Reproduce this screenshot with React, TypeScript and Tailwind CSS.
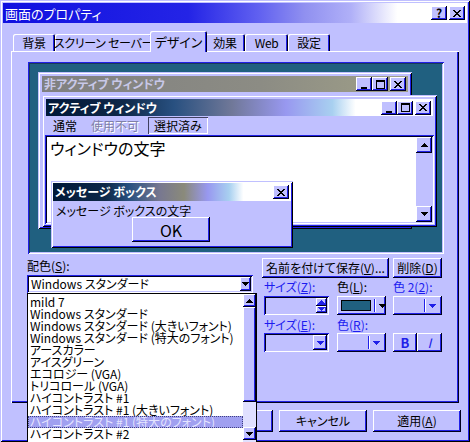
import React from "react";

const raised =
  "shadow-[inset_-1px_-1px_0_#000020,inset_1px_1px_0_#ffffff,inset_-2px_-2px_0_#2020e8]";
const sunken =
  "shadow-[inset_1px_1px_0_#2020e8,inset_-1px_-1px_0_#ffffff,inset_2px_2px_0_#000020,inset_-2px_-2px_0_#c0c0ff]";
const frame =
  "shadow-[inset_1px_1px_0_#c0c0ff,inset_-1px_-1px_0_#000000,inset_2px_2px_0_#ffffff,inset_-2px_-2px_0_#2020e8]";

const Down = ({ c = "#000000" }: { c?: string }) => (
  <svg width="7" height="4" viewBox="0 0 7 4" shapeRendering="crispEdges">
    <path d="M0 0h7v1h-1v1h-1v1h-1v1h-1v-1h-1v-1h-1v-1h-1z" fill={c} />
  </svg>
);

const Up = ({ c = "#000000" }: { c?: string }) => (
  <svg width="7" height="4" viewBox="0 0 7 4" shapeRendering="crispEdges">
    <path d="M3 0h1v1h1v1h1v1h1v1h-7v-1h1v-1h1v-1h1z" fill={c} />
  </svg>
);

const Glyph = ({ kind }: { kind: "min" | "max" | "close" }) => {
  if (kind === "min")
    return (
      <svg width="8" height="9" viewBox="0 0 8 9" shapeRendering="crispEdges">
        <rect x="1" y="7" width="6" height="2" fill="#000" />
      </svg>
    );
  if (kind === "max")
    return (
      <svg width="9" height="9" viewBox="0 0 9 9" shapeRendering="crispEdges">
        <path d="M0 0h9v9h-9zM1 2v6h7v-6z" fill="#000" fillRule="evenodd" />
      </svg>
    );
  return (
    <svg width="8" height="7" viewBox="0 0 8 7" shapeRendering="crispEdges">
      <path
        d="M0 0h2v1h1v1h2v-1h1v-1h2v1h-1v1h-1v1h-1v1h1v1h1v1h1v1h-2v-1h-1v-1h-2v1h-1v1h-2v-1h1v-1h1v-1h1v-1h-1v-1h-1v-1h-1z"
        fill="#000"
      />
    </svg>
  );
};

function Btn({ className = "", children }: { className?: string; children?: React.ReactNode }) {
  return (
    <div className={`flex items-center justify-center bg-[#c0c0ff] ${raised} ${className}`}>
      {children}
    </div>
  );
}

const TitleButtons = () => (
  <div className="ml-auto flex items-center">
    <Btn className="w-[16px] h-[14px] pt-[1px]">
      <Glyph kind="min" />
    </Btn>
    <Btn className="w-[16px] h-[14px]">
      <Glyph kind="max" />
    </Btn>
    <Btn className="ml-[2px] w-[16px] h-[14px]">
      <Glyph kind="close" />
    </Btn>
  </div>
);

const U = ({ children }: { children: React.ReactNode }) => <span className="underline">{children}</span>;

const schemes = [
  "mild 7",
  "Windows スタンダード",
  "Windows スタンダード (大きいフォント)",
  "Windows スタンダード (特大のフォント)",
  "アースカラー",
  "アイスグリーン",
  "エコロジー (VGA)",
  "トリコロール (VGA)",
  "ハイコントラスト #1",
  "ハイコントラスト #1 (大きいフォント)",
  "ハイコントラスト #1 (特大のフォント)",
  "ハイコントラスト #2",
];

const tabs = [
  { label: "背景", w: "w-[42px]" },
  { label: "スクリーン セーバー", w: "w-[97px]" },
  { label: "デザイン", w: "w-[57px]", active: true },
  { label: "効果", w: "w-[40px]" },
  { label: "Web", w: "w-[43px]" },
  { label: "設定", w: "w-[42px]" },
];

export default function App() {
  return (
    <div
      className={`relative w-[470px] h-[442px] overflow-hidden bg-[#c0c0ff] p-[3px] flex flex-col text-[12px] leading-none text-black font-['Noto_Sans_CJK_JP',sans-serif] [font-feature-settings:'palt'] ${frame}`}
    >
      {/* title bar */}
      <div className="h-[20px] flex items-center pl-[2px] pr-[2px] bg-[linear-gradient(to_right,#1010e0_0%,#2424e6_40%,#6060f0_55%,#9090f0_65%,#b0b0f8_75%,#ffffff_85%)]">
        <span className="text-white text-[13px]">画面のプロパティ</span>
        <div className="ml-auto flex gap-[2px]">
          <Btn className="w-[16px] h-[14px] font-bold text-[12px]">?</Btn>
          <Btn className="w-[16px] h-[14px]">
            <Glyph kind="close" />
          </Btn>
        </div>
      </div>

      {/* tabs */}
      <div className="mt-[8px] h-[20px] flex items-end pl-[10px]">
        {tabs.map((t) =>
          t.active ? (
            <div
              key={t.label}
              className={`${t.w} relative z-10 -mx-[2px] -mb-[1px] h-[21px] flex items-center justify-center whitespace-nowrap text-[13px] bg-[#c0c0ff] rounded-t-[2px] shadow-[inset_1px_1px_0_#ffffff,inset_-1px_0_0_#000020,inset_-2px_0_0_#2020e8]`}
            >
              {t.label}
            </div>
          ) : (
            <div
              key={t.label}
              className={`${t.w} h-[17px] flex items-center justify-center whitespace-pre text-[12px] tracking-[-0.3px] rounded-t-[2px] shadow-[inset_1px_1px_0_#ffffff,inset_-1px_0_0_#000020,inset_-2px_0_0_#2020e8]`}
            >
              {t.label}
            </div>
          )
        )}
      </div>

      {/* tab panel */}
      <div className="ml-[8px] w-[448px] h-[352px] flex flex-col shadow-[inset_1px_1px_0_#ffffff,inset_-1px_-1px_0_#000020,inset_-2px_-2px_0_#2020e8]">
        {/* preview */}
        <div className="ml-[17px] mt-[11px] w-[416px] h-[192px] p-[2px] shadow-[inset_1px_1px_0_#2020e8,inset_-1px_-1px_0_#ffffff,inset_2px_2px_0_#1a3a5a,inset_-2px_-2px_0_#c0c0ff]">
          <div className="relative w-full h-full bg-[#206080]">
            {/* inactive window */}
            <div className={`absolute left-[8px] top-[8px] w-[374px] h-[157px] bg-[#c0c0ff] p-[4px] ${frame}`}>
              <div className="h-[16px] flex items-center pl-[2px] pr-[2px] bg-[linear-gradient(to_right,#808080,#8c8c84_60%,#a0a088)]">
                <span className="font-bold text-[#c8c8e8]">非アクティブ ウィンドウ</span>
                <TitleButtons />
              </div>
            </div>

            {/* active window */}
            <div className={`absolute left-[12px] top-[31px] w-[395px] h-[132px] bg-[#c0c0ff] p-[3px] flex flex-col ${frame}`}>
              <div className="mx-[1px] mt-[1px] h-[17px] flex items-center pl-[2px] pr-[2px] bg-[linear-gradient(to_right,#001838_0%,#0e2848_20%,#285080_33%,#707898_48%,#9898f0_62%,#a8d0f0_74%,#ffffff_80%)]">
                <span className="font-bold text-white">アクティブ ウィンドウ</span>
                <TitleButtons />
              </div>
              <div className="h-[19px] flex items-center pl-[8px] gap-[14px]">
                <span>通常</span>
                <span className="text-[#8080a8] [text-shadow:1px_1px_0_#ffffff]">使用不可</span>
                <span className="-ml-[5px] h-[17px] px-[6px] flex items-center shadow-[inset_1px_1px_0_#404060,inset_-1px_-1px_0_#ffffff]">
                  選択済み
                </span>
              </div>
              <div className={`flex-1 flex bg-white p-[2px] ${sunken}`}>
                <div className="flex-1 pl-[3px] pt-[3px] text-[16px]">ウィンドウの文字</div>
                <div className="w-[16px] flex flex-col justify-between bg-[#c0c0ff]">
                  <Btn className="h-[16px]">
                    <Up />
                  </Btn>
                  <Btn className="h-[16px]">
                    <Down />
                  </Btn>
                </div>
              </div>
            </div>

            {/* message box */}
            <div className={`absolute left-[21px] top-[117px] w-[242px] h-[67px] bg-[#c0c0ff] p-[2px] flex flex-col ${frame}`}>
              <div className="h-[18px] flex items-center pl-[2px] pr-[2px] bg-[linear-gradient(to_right,#001838_0%,#0e2848_22%,#285080_32%,#787890_45%,#8a8a7a_55%,#9898f0_65%,#a8d0f0_74%,#ffffff_80%)]">
                <span className="font-bold text-white">メッセージ ボックス</span>
                <Btn className="ml-auto w-[16px] h-[14px]">
                  <Glyph kind="close" />
                </Btn>
              </div>
              <div className="pl-[3px] pt-[4px] h-[16px]">メッセージ ボックスの文字</div>
              <Btn className="ml-[79px] w-[78px] h-[25px] text-[16px]">OK</Btn>
            </div>
          </div>
        </div>

        {/* lower controls */}
        <div className="mt-[4px] flex">
          <div className="ml-[16px] w-[226px] flex flex-col">
            <div className="h-[17px] pt-[2px]">
              配色(<U>S</U>):
            </div>
            <div className={`h-[18px] flex items-center bg-white p-[2px] ${sunken}`}>
              <span className="flex-1 pl-[2px]">Windows スタンダード</span>
              <Btn className="w-[11px] h-full">
                <Down />
              </Btn>
            </div>
          </div>

          <div className="ml-[9px] w-[181px] flex flex-col">
            <div className="h-[20px] flex gap-[4px]">
              <Btn className="w-[127px] h-full">
                名前を付けて保存(<U>V</U>)...
              </Btn>
              <Btn className="w-[49px] h-full">
                削除(<U>D</U>)
              </Btn>
            </div>
            <div className="mt-[3px] h-[15px] pl-[2px] grid grid-cols-[73px_56px_49px] text-[#1c1cf0]">
              <span>
                サイズ(<U>Z</U>):
              </span>
              <span className="text-black">
                色(<U>L</U>):
              </span>
              <span>
                色 2(<U>2</U>):
              </span>
            </div>
            <div className="h-[19px] pl-[2px] grid grid-cols-[73px_56px_49px]">
              <div className={`w-[65px] h-full flex justify-end p-[2px] ${sunken}`}>
                <div className="w-[11px] flex flex-col">
                  <Btn className="flex-1">
                    <Up c="#2020e8" />
                  </Btn>
                  <Btn className="flex-1">
                    <Down c="#2020e8" />
                  </Btn>
                </div>
              </div>
              <Btn className="w-[49px] h-full justify-start pl-[4px] gap-[3px]">
                <div className="w-[30px] h-[11px] bg-[#206080] border border-black" />
                <div className="w-[2px] h-[13px] border-l border-[#2020e8] bg-white" />
                <Down />
              </Btn>
              <Btn className="w-[49px] h-full justify-end pr-[6px] gap-[3px]">
                <div className="w-[2px] h-[13px] border-l border-[#2020e8] bg-white" />
                <Down c="#2020e8" />
              </Btn>
            </div>
            <div className="mt-[4px] h-[14px] pl-[2px] grid grid-cols-[73px_56px_49px] text-[#1c1cf0]">
              <span>
                サイズ(<U>E</U>):
              </span>
              <span>
                色(<U>R</U>):
              </span>
              <span />
            </div>
            <div className="h-[19px] pl-[2px] grid grid-cols-[73px_56px_49px]">
              <div className={`w-[65px] h-full flex justify-end p-[2px] ${sunken}`}>
                <Btn className="w-[14px]">
                  <Down c="#2020e8" />
                </Btn>
              </div>
              <Btn className="w-[49px] h-full justify-end pr-[6px] gap-[3px]">
                <div className="w-[2px] h-[13px] border-l border-[#2020e8] bg-white" />
                <Down c="#2020e8" />
              </Btn>
              <div className="w-[49px] h-full flex">
                <Btn className="w-[24px] h-full font-bold text-[13px] text-[#2020e8]">B</Btn>
                <Btn className="w-[25px] h-full italic text-[13px] text-[#2020e8]">I</Btn>
              </div>
            </div>
          </div>
        </div>
      </div>

      {/* dialog buttons */}
      <div className="mt-[7px] h-[22px] flex justify-end gap-[6px] pr-[6px]">
        <Btn className="w-[88px] h-full">OK</Btn>
        <Btn className="w-[88px] h-full">キャンセル</Btn>
        <Btn className="w-[88px] h-full">
          適用(<U>A</U>)
        </Btn>
      </div>

      {/* open scheme list */}
      <div className="absolute left-[27px] top-[293px] w-[230px] h-[152px] flex bg-white border border-black">
        <div className="flex-1 flex flex-col pt-[2px]">
          {schemes.map((s, i) =>
            i === 10 ? (
              <div
                key={s}
                className="h-[12px] flex items-center pl-[2px] whitespace-nowrap bg-[#a0a0f0] text-[#e4e4ff] outline-1 outline-dotted outline-[#404080] -outline-offset-1"
              >
                {s}
              </div>
            ) : (
              <div key={s} className="h-[12px] flex items-center pl-[2px] whitespace-nowrap">
                {s}
              </div>
            )
          )}
        </div>
        <div className="w-[13px] flex flex-col bg-[#e0e0ff]">
          <Btn className="h-[13px]">
            <Up />
          </Btn>
          <Btn className="h-[95px]" />
          <div className="flex-1" />
          <Btn className="h-[13px] mb-[4px]">
            <Down />
          </Btn>
        </div>
      </div>
    </div>
  );
}
